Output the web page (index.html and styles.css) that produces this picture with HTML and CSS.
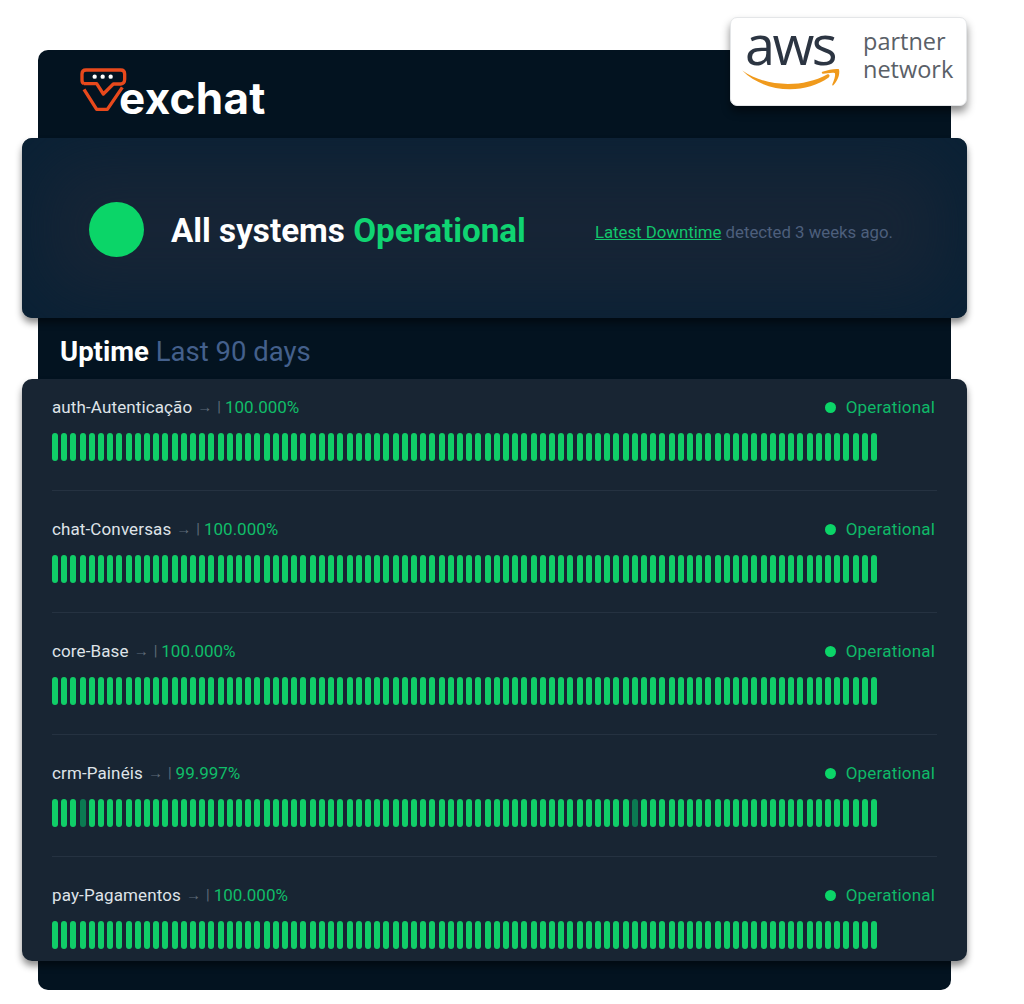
FILE: index.html
```html
<!DOCTYPE html>
<html lang="en">
<head>
<meta charset="utf-8">
<title>Vexchat Status</title>
<link rel="stylesheet" href="styles.css">
</head>
<body>
<main class="shell">
  <header class="brand">
    <svg class="brand-mark" viewBox="0 0 210 180" width="70" height="60" aria-hidden="true">
      <path d="M30 71Q24 69 24 60V42Q24 30 36 30H140Q152 30 152 42V58Q152 71 140 72H118L88 102L68 71H30" fill="none" stroke="#e8491c" stroke-width="10" stroke-linejoin="round"/>
      <path d="M30 88L68 148H100L145 82" fill="none" stroke="#e8491c" stroke-width="10" stroke-linejoin="round"/>
      <circle cx="62" cy="50" r="6.500" fill="#fff"/>
      <circle cx="86" cy="50" r="6.500" fill="#fff"/>
      <circle cx="110" cy="50" r="6.500" fill="#fff"/>
    </svg>
    <span class="brand-name">exchat</span>
  </header>

  <div class="partner">
    <div class="partner-aws">
      <span class="partner-aws-text">aws</span>
      <svg class="partner-swoosh" viewBox="0 130 345 95" width="115" height="32" aria-hidden="true">
        <path d="M22 146C90 195 200 200 276 158C282 155 287 162 281 167C210 218 90 215 22 146Z" fill="#f09a1c"/>
        <path d="M262 150C280 144 300 140 312 142C316 160 306 178 295 190C293 192 291 190 292 187C297 175 302 162 300 154C292 151 276 155 264 156C260 156 259 151 262 150Z" fill="#f09a1c"/>
      </svg>
    </div>
    <div class="partner-label">partner<br>network</div>
  </div>

  <section class="hero">
    <span class="hero-dot"></span>
    <h1 class="hero-title">All systems <em>Operational</em></h1>
    <p class="hero-note"><a href="#">Latest Downtime</a> detected 3 weeks ago.</p>
  </section>

  <h2 class="uptime-title">Uptime <span>Last 90 days</span></h2>

  <section class="services">
    <article class="service">
      <div class="service-head">
        <span class="service-name">auth-Autenticação</span><span class="service-arrow">→</span><span class="service-sep">|</span><span class="service-pct">100.000%</span>
        <span class="service-state">Operational</span>
      </div>
      <div class="bars"></div>
    </article>
    <article class="service">
      <div class="service-head">
        <span class="service-name">chat-Conversas</span><span class="service-arrow">→</span><span class="service-sep">|</span><span class="service-pct">100.000%</span>
        <span class="service-state">Operational</span>
      </div>
      <div class="bars"></div>
    </article>
    <article class="service">
      <div class="service-head">
        <span class="service-name">core-Base</span><span class="service-arrow">→</span><span class="service-sep">|</span><span class="service-pct">100.000%</span>
        <span class="service-state">Operational</span>
      </div>
      <div class="bars"></div>
    </article>
    <article class="service">
      <div class="service-head">
        <span class="service-name">crm-Painéis</span><span class="service-arrow">→</span><span class="service-sep">|</span><span class="service-pct">99.997%</span>
        <span class="service-state">Operational</span>
      </div>
      <div class="bars" data-dim="3,63"></div>
    </article>
    <article class="service">
      <div class="service-head">
        <span class="service-name">pay-Pagamentos</span><span class="service-arrow">→</span><span class="service-sep">|</span><span class="service-pct">100.000%</span>
        <span class="service-state">Operational</span>
      </div>
      <div class="bars"></div>
    </article>
  </section>
</main>
<script src="app.js"></script>
</body>
</html>
```
FILE: styles.css
```css
* { box-sizing: border-box; }
html, body { margin: 0; background: #fff; }
body { font-family: Roboto, "Liberation Sans", sans-serif; height: 1004px; overflow: hidden; }

.shell {
  position: relative;
  margin: 50px 73px 0 38px;
  height: 940px;
  background: #031320;
  border-radius: 10px;
  padding-top: 10px;
}

.brand { display: flex; align-items: flex-start; height: 78px; padding-left: 36px; }
.brand-mark { flex: none; margin-right: -25px; }
.brand-name {
  font-family: Inter, "Liberation Sans", sans-serif;
  font-weight: 700;
  font-size: 44px;
  line-height: 48px;
  color: #fff;
  margin-top: 14px;
  letter-spacing: 0.3px;
}

.partner {
  position: absolute;
  top: -33px;
  right: -16px;
  width: 237px;
  height: 89px;
  background: #fff;
  border-radius: 7px;
  border: 1px solid #e4e6e8;
  box-shadow: 0 6px 8px rgba(0, 0, 0, 0.45);
  display: flex;
  align-items: flex-start;
  padding: 0 0 0 12px;
}
.partner-aws { position: relative; width: 120px; height: 86px; }
.partner-aws-text {
  display: block;
  font-family: "Open Sans", sans-serif;
  font-weight: 500;
  font-size: 54px;
  line-height: 50px;
  letter-spacing: -2.500px;
  color: #2c3542;
  margin-top: 1px;
  padding-left: 2px;
}
.partner-swoosh { position: absolute; left: -8px; top: 47px; }
.partner-label {
  font-family: "Open Sans", sans-serif;
  font-size: 23.500px;
  line-height: 28px;
  color: #5a6067;
  margin-top: 9px;
}

.hero {
  display: flex;
  align-items: center;
  height: 180px;
  margin: 0 -16px;
  padding: 2px 0 0 67px;
  border-radius: 10px;
  background: #172536;
  box-shadow: inset 0 0 70px 22px #0a2135, 0 5px 7px rgba(0, 0, 0, 0.45);
}
.hero-dot { width: 55px; height: 55px; border-radius: 50%; background: #0bd568; flex: none; }
.hero-title { margin: 3px 0 0 27px; font-size: 33.200px; font-weight: 700; color: #fff; line-height: 40px; white-space: nowrap; }
.hero-title em { font-style: normal; color: #10d472; }
.hero-note { margin: 6px 0 0 69px; font-size: 16.800px; color: #4d5f7c; white-space: nowrap; }
.hero-note a { color: #12c56c; text-decoration: underline; }

.uptime-title {
  margin: 0;
  height: 61px;
  padding: 15px 0 0 22px;
  font-size: 27.500px;
  line-height: 38px;
  font-weight: 700;
  color: #fff;
}
.uptime-title span { font-weight: 400; color: #44608c; }

.services {
  margin: 0 -16px;
  height: 582px;
  padding: 16px 30px 0;
  background: #182533;
  border-radius: 10px;
  box-shadow: 0 5px 7px rgba(0, 0, 0, 0.45);
}
.service { height: 96px; margin-bottom: 26px; border-bottom: 1px solid #253241; }
.service:last-child { border-bottom: 0; margin-bottom: 0; }
.service-head { display: flex; align-items: center; height: 24px; font-size: 17px; white-space: nowrap; }
.service-name { color: #dfe3e8; letter-spacing: 0.12px; }
.service-arrow { color: #5f6b79; font-size: 15px; margin: 0 5px; }
.service-sep { color: #5f6b79; margin-right: 4px; font-size: 15px; }
.service-pct { color: #10bd69; }
.service-state { margin-left: auto; margin-right: 2px; color: #0fb968; letter-spacing: 0.2px; display: flex; align-items: center; }
.service-state::before {
  content: "";
  width: 11px;
  height: 11px;
  border-radius: 50%;
  background: #0bd568;
  margin-right: 10px;
}

.bars { display: flex; justify-content: space-between; width: 826px; height: 28px; margin-top: 14px; }
.bar { width: 6px; border-radius: 3px; background: #10ce68; }
.bar-dim { background: #0b7a52; }
```
FILE: app.js
```js
document.querySelectorAll('.bars').forEach(function (row) {
  var dim = (row.dataset.dim || '').split(',').map(Number);
  for (var i = 0; i < 90; i++) {
    var bar = document.createElement('span');
    bar.className = 'bar';
    if (row.dataset.dim && dim.indexOf(i) !== -1) bar.classList.add('bar-dim');
    row.appendChild(bar);
  }
});
```
